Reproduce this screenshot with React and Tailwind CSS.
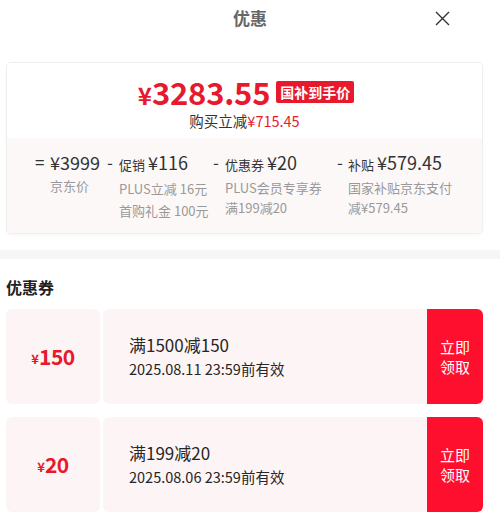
import React from "react";

const font = { fontFamily: '"Noto Sans CJK SC", "Noto Sans", sans-serif' };

function Coupon({ amount, title, date }) {
  return (
    <div className="flex h-[95px] w-[477px]">
      <div className="relative flex w-[94px] items-center justify-center rounded-[6px] bg-[#fdf4f5] text-[#e8192c]">
        <span className="text-[13px] font-bold leading-none mt-[3px]">¥</span>
        <span className="text-[21px] font-bold leading-none tracking-[-0.5px]">{amount}</span>
      </div>
      <div className="ml-[3px] flex flex-1 overflow-hidden rounded-[6px] bg-[#fdf4f5]">
        <div className="flex flex-1 flex-col justify-center pl-[26px] text-[#262626]">
          <div className="text-[17px] leading-[24px]">{title}</div>
          <div className="text-[14.5px] leading-[24px]">{date}</div>
        </div>
        <div className="flex w-[56px] flex-col items-center justify-center bg-[#fe0f2d] text-[15px] leading-[20px] text-white">
          <span>立即</span>
          <span>领取</span>
        </div>
      </div>
    </div>
  );
}

export default function App() {
  return (
    <div className="w-[500px] h-[525px] overflow-hidden bg-white" style={font}>
      <div className="relative flex h-[36px] items-center justify-center">
        <span className="text-[17px] font-bold text-[#666]">优惠</span>
        <svg className="absolute right-[50px] top-[11px]" width="15" height="15" viewBox="0 0 15 15">
          <path d="M1 1L14 14M14 1L1 14" stroke="#333" strokeWidth="1.4" fill="none" />
        </svg>
      </div>
      <div className="ml-[6px] mt-[26px] w-[477px] overflow-hidden rounded-[5px] border border-[#eeeeee] shadow-[0_1px_3px_rgba(0,0,0,0.04)]">
        <div className="flex h-[75px] flex-col items-center bg-white pt-[11px]">
          <div className="flex h-[36px] items-center pl-[3px]">
            <span className="text-[#e8192c] font-bold leading-[28px] text-[24px] mt-[5px]">¥</span>
            <span className="text-[#e8192c] font-bold leading-[36px] text-[31px] tracking-[-0.2px]">3283.55</span>
            <span className="ml-[6px] rounded-[2px] bg-[#e8192c] px-[4px] text-[14px] font-bold leading-[22px] text-white">国补到手价</span>
          </div>
          <div className="mt-[1px] text-[14.5px] leading-[20px] text-[#333]">
            购买立减<span className="text-[#e8192c]">¥715.45</span>
          </div>
        </div>
        <div className="flex h-[95px] bg-[#fdf8f8] pl-[28px] pt-[11px]">
          <div className="flex w-[72px]">
            <span className="w-[15px] text-[17px] leading-[26px] text-[#333]">=</span>
            <div className="flex flex-col">
              <span className="text-[18px] leading-[26px] text-[#333]">¥3999</span>
              <span className="text-[13px] leading-[22px] text-[#999]">京东价</span>
            </div>
          </div>
          <div className="flex w-[106px]">
            <span className="w-[12px] text-[17px] leading-[26px] text-[#333]">-</span>
            <div className="flex flex-col">
              <span className="leading-[26px] text-[#333]"><span className="text-[13px]">促销 </span><span className="text-[18px]">¥116</span></span>
              <span className="text-[13px] leading-[22px] text-[#999] whitespace-nowrap">PLUS立减 16元</span>
              <span className="text-[13px] leading-[22px] text-[#999] whitespace-nowrap">首购礼金 100元</span>
            </div>
          </div>
          <div className="flex w-[124px]">
            <span className="w-[12px] text-[17px] leading-[26px] text-[#333]">-</span>
            <div className="flex flex-col">
              <span className="leading-[26px] text-[#333]"><span className="text-[13px]">优惠券 </span><span className="text-[18px]">¥20</span></span>
              <span className="text-[13px] leading-[20px] text-[#999] whitespace-nowrap">PLUS会员专享券</span>
              <span className="text-[13px] leading-[20px] text-[#999] whitespace-nowrap">满199减20</span>
            </div>
          </div>
          <div className="flex">
            <span className="w-[11px] text-[17px] leading-[26px] text-[#333]">-</span>
            <div className="flex flex-col">
              <span className="leading-[26px] text-[#333]"><span className="text-[13px]">补贴 </span><span className="text-[18px]">¥579.45</span></span>
              <span className="text-[13px] leading-[20px] text-[#999] whitespace-nowrap">国家补贴京东支付</span>
              <span className="text-[13px] leading-[20px] text-[#999] whitespace-nowrap">减¥579.45</span>
            </div>
          </div>
        </div>
      </div>
      <div className="mt-[16px] h-[9px] bg-[#f6f6f9]" />
      <div className="pl-[6px] pt-[16px] text-[16px] font-bold leading-[24px] text-[#222]">优惠券</div>
      <div className="ml-[6px] mt-[10px] flex flex-col gap-[13px]">
        <Coupon amount="150" title="满1500减150" date="2025.08.11 23:59前有效" />
        <Coupon amount="20" title="满199减20" date="2025.08.06 23:59前有效" />
      </div>
    </div>
  );
}
